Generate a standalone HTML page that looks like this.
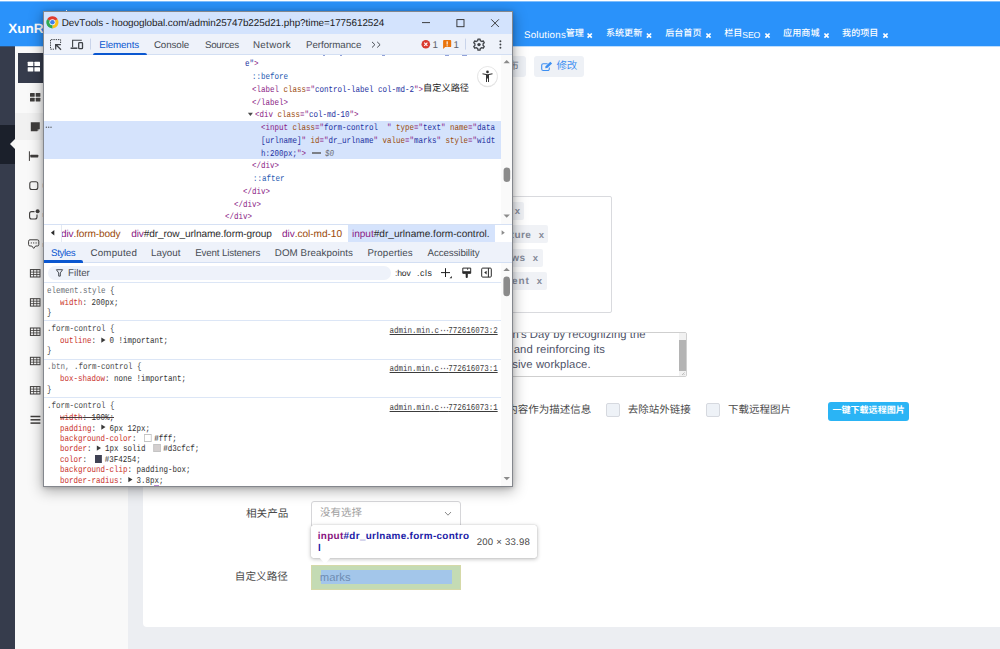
<!DOCTYPE html>
<html><head><meta charset="utf-8"><title>page</title>
<style>
*{box-sizing:border-box;margin:0;padding:0}
html,body{width:1000px;height:649px;overflow:hidden;background:#eceef2;font-family:"Liberation Sans",sans-serif;font-kerning:none;text-rendering:geometricPrecision}
.a{position:absolute}
.u{position:absolute;white-space:pre;line-height:1;font-kerning:none}
.cjt{font-family:"Liberation Sans","Noto Sans CJK SC",sans-serif}
.m{position:absolute;white-space:pre;font-family:"Liberation Mono",monospace;font-size:9px;line-height:12px;transform:scaleX(.8333);transform-origin:0 0;color:#303030}
.mr{transform-origin:100% 0;text-decoration:underline;color:#3c3c3c}
.tg{color:#8a1a84}.an{color:#9a4a0a}.av{color:#1c2fa0}.ps{color:#2458b0}.gy{color:#6a6e74}
.pn{color:#c9302a}.sel{color:#4a4a4a}
.hr{position:absolute;left:44px;width:457px;height:1px;background:#dce6f6}
.sw{display:inline-block;width:8.6px;height:7.4px;vertical-align:-.5px;margin:0 3.4px 0 4px;border:1px solid #c4c4c4}
</style></head><body>
<!-- ============ PAGE ============ -->
<div class="a" style="left:0;top:0;width:1000px;height:2px;background:#fff"></div>
<div class="a" style="left:0;top:1px;width:1000px;height:45px;background:#2a92fa"></div>
<div class="a" style="left:0;top:1px;width:1000px;height:1px;background:#fff;opacity:.4"></div>
<div class="a" style="left:15px;top:46px;width:113px;height:603px;background:#f9f9f9"></div>
<div class="a" style="left:15px;top:112.5px;width:113px;height:27.5px;background:#f1f1f1"></div>
<div class="a" style="left:0;top:46px;width:15px;height:603px;background:#363c4c"></div>
<div class="a" style="left:0;top:125px;width:15px;height:39px;background:#1b202b"></div>
<div class="a" style="left:9.5px;top:138.5px;width:0;height:0;border-top:5.5px solid transparent;border-bottom:5.5px solid transparent;border-right:5.5px solid #f5f5f5"></div>
<div class="a" style="left:143px;top:46px;width:857px;height:581px;background:#fff;border-radius:0 0 0 4px"></div>
<div class="a" style="left:0;top:46px;width:1000px;height:1px;background:#2a92fa;opacity:.3"></div>
<div class="a" style="left:18px;top:53px;width:40px;height:29.5px;background:#363c4c"></div>

<div class="u" style="left:8.28px;top:22.00px;font-size:13.5px;letter-spacing:0.000px;color:#fff;font-weight:bold;">XunRuiCMS</div>

<!-- top tabs -->
<div class="u" style="left:523.96px;top:31.00px;font-size:9.75px;letter-spacing:0.211px;color:#fff;">Solutions</div>
<div class="u cjt" style="left:565.66px;top:29.25px;font-size:9.1px;color:#fff;font-weight:500;">管理</div>
<div class="u cjt" style="left:605.89px;top:29.25px;font-size:9.1px;color:#fff;font-weight:500;">系统更新</div>
<div class="u cjt" style="left:665.15px;top:29.25px;font-size:9.1px;color:#fff;font-weight:500;">后台首页</div>
<div class="u cjt" style="left:724.15px;top:29.25px;font-size:9.1px;color:#fff;font-weight:500;">栏目</div>
<div class="u" style="left:742.20px;top:31.00px;font-size:8.7px;letter-spacing:-0.081px;color:#fff;">SEO</div>
<div class="u cjt" style="left:783.11px;top:29.25px;font-size:9.1px;color:#fff;font-weight:500;">应用商城</div>
<div class="u cjt" style="left:842.07px;top:29.25px;font-size:9.1px;color:#fff;font-weight:500;">我的项目</div>

<!-- buttons row -->
<div class="a" style="left:495px;top:56px;width:31px;height:21px;background:#eef1f6;border-radius:3px"></div>
<div class="u cjt" style="left:508.17px;top:61.25px;font-size:10.5px;color:#6f7687;">布</div>
<div class="a" style="left:534px;top:56px;width:50px;height:21px;background:#eef1f6;border-radius:3px"></div>
<div class="u cjt" style="left:556.39px;top:61.25px;font-size:10.5px;color:#3d8ff2;">修改</div>

<!-- tag box -->
<div class="a" style="left:480px;top:196px;width:132px;height:117px;border:1px solid #d9dade;border-radius:2px;background:#fff"></div>
<div class="a" style="left:490px;top:202px;width:34px;height:18px;background:#f0f2f6;border-radius:2px"></div>
<div class="a" style="left:490px;top:225px;width:58px;height:18px;background:#f0f2f6;border-radius:2px"></div>
<div class="a" style="left:490px;top:249px;width:52.5px;height:17.5px;background:#f0f2f6;border-radius:2px"></div>
<div class="a" style="left:490px;top:272px;width:56.5px;height:17.5px;background:#f0f2f6;border-radius:2px"></div>
<div class="u" style="left:514.74px;top:207.00px;font-size:9.5px;letter-spacing:-1.249px;color:#858a99;font-weight:bold;">x</div>
<div class="u" style="left:504.61px;top:231.00px;font-size:10.0px;letter-spacing:0.445px;color:#858a99;font-weight:bold;">cture</div>
<div class="u" style="left:538.74px;top:231.00px;font-size:9.5px;letter-spacing:-0.749px;color:#858a99;font-weight:bold;">x</div>
<div class="u" style="left:505.11px;top:254.00px;font-size:10.0px;letter-spacing:0.500px;color:#858a99;font-weight:bold;">ews</div>
<div class="u" style="left:532.64px;top:254.00px;font-size:9.5px;letter-spacing:-0.849px;color:#858a99;font-weight:bold;">x</div>
<div class="u" style="left:502.34px;top:277.00px;font-size:10.0px;letter-spacing:0.897px;color:#858a99;font-weight:bold;">ment</div>
<div class="u" style="left:536.64px;top:277.00px;font-size:9.5px;letter-spacing:-0.849px;color:#858a99;font-weight:bold;">x</div>

<!-- textarea -->
<div class="a" style="left:480px;top:332px;width:206.5px;height:45px;border:1px solid #cfcfcf;border-radius:2px;background:#fff;overflow:hidden">
 <div class="a" style="right:0;top:0;width:6.5px;height:43px;background:#f1f1f1"></div>
 <div class="a" style="right:0;top:7px;width:6.5px;height:30.5px;background:#b4b4b4"></div>
</div>
<div class="a" style="left:500px;top:333px;width:170px;height:12px;overflow:hidden">
 <div class="a" style="left:-500px;top:-333px"><div class="u" style="left:512.45px;top:330.00px;font-size:11.25px;letter-spacing:0.058px;color:#4d5267;">n's Day by recognizing the</div></div>
</div>
<div class="u" style="left:513.72px;top:345.00px;font-size:11.25px;letter-spacing:0.133px;color:#4d5267;">and reinforcing its</div>
<div class="u" style="left:505.87px;top:360.00px;font-size:11.25px;letter-spacing:0.106px;color:#4d5267;">usive workplace.</div>

<!-- checkbox row -->
<div class="u cjt" style="left:507.36px;top:404.55px;font-size:10.5px;color:#4a4a4a;">内容作为描述信息</div>
<div class="a" style="left:605.5px;top:402.5px;width:14.5px;height:14.5px;background:#eef2f7;border:1px solid #d6d9df;border-radius:2px"></div>
<div class="u cjt" style="left:627.74px;top:404.55px;font-size:10.5px;color:#4a4a4a;">去除站外链接</div>
<div class="a" style="left:705.5px;top:402.5px;width:14.5px;height:14.5px;background:#eef2f7;border:1px solid #d6d9df;border-radius:2px"></div>
<div class="u cjt" style="left:728.02px;top:404.55px;font-size:10.5px;color:#4a4a4a;">下载远程图片</div>
<div class="a" style="left:828px;top:401.5px;width:81px;height:19.5px;background:#2ab4f5;border-radius:3px"></div>
<div class="u cjt" style="left:832.42px;top:406.28px;font-size:9.05px;color:#fff;font-weight:bold;">一键下载远程图片</div>

<!-- related products -->
<div class="u cjt" style="left:245.99px;top:508.60px;font-size:10.6px;color:#4a4a4a;">相关产品</div>
<div class="a" style="left:311px;top:501px;width:150px;height:27px;border:1px solid #d6d6d9;border-radius:3px;background:#fff"></div>
<div class="u cjt" style="left:319.93px;top:508.25px;font-size:10.5px;color:#a0a0a0;">没有选择</div>
<svg class="a" style="left:444px;top:510px" width="8" height="8" viewBox="0 0 8 8"><path d="M1 2 L4 5.2 L7 2" fill="none" stroke="#8a8a8a" stroke-width="1"/></svg>

<!-- custom path -->
<div class="u cjt" style="left:234.87px;top:571.70px;font-size:10.6px;color:#4a4a4a;">自定义路径</div>
<div class="a" style="left:311px;top:564.5px;width:150px;height:25px;background:#c4dbb4;outline:1px solid rgba(225,215,160,.6);outline-offset:-1px"></div>
<div class="a" style="left:320.5px;top:570px;width:131.5px;height:14px;background:#a3c6ea"></div>
<div class="u" style="left:319.75px;top:573.00px;font-size:11.25px;letter-spacing:0.082px;color:#6e8cb2;">marks</div>

<!-- tooltip -->
<div class="a" style="left:311px;top:525px;width:225.5px;height:32.5px;background:#fff;border-radius:2.5px;box-shadow:0 1px 4px rgba(0,0,0,.28),0 0 1px rgba(0,0,0,.25)"></div>
<div class="a" style="left:319px;top:557px;width:0;height:0;border-left:6px solid transparent;border-right:6px solid transparent;border-top:7px solid #fff"></div>
<div class="u" style="left:317.71px;top:532.00px;font-size:9.9px;letter-spacing:0.338px;color:#1a1aa6;font-weight:bold;"><span style="color:#881280">input</span>#dr_urlname.form-contro</div>
<div class="u" style="left:317.91px;top:544.00px;font-size:9.9px;letter-spacing:0.000px;color:#1a1aa6;font-weight:bold;">l</div>
<div class="u" style="left:476.72px;top:538.00px;font-size:9.6px;letter-spacing:0.212px;color:#494949;">200 × 33.98</div>

<!-- ============ DEVTOOLS ============ -->
<div class="a" style="left:43px;top:11px;width:470px;height:476px;background:#fff;border:1px solid #84878d;box-shadow:0 3px 13px 1px rgba(0,0,0,.31),0 1px 4px rgba(0,0,0,.18)"></div>
<div class="a" style="left:66px;top:10px;width:1px;height:1px;background:#fff;opacity:.8"></div>
<div class="a" style="left:44px;top:12px;width:468px;height:22px;background:#d3e3fd"></div>
<div class="a" style="left:44px;top:34px;width:468px;height:21px;background:#eef2fa;border-bottom:1px solid #d3dff3"></div>
<div class="u" style="left:61.79px;top:19.00px;font-size:9.9px;letter-spacing:-0.045px;color:#1b1b1b;">DevTools - hoogoglobal.com/admin25747b225d21.php?time=1775612524</div>
<div class="u" style="left:99.30px;top:41.00px;font-size:9.75px;letter-spacing:-0.113px;color:#0b57d0;">Elements</div>
<div class="a" style="left:92.5px;top:52.5px;width:54.5px;height:2.5px;background:#0b57d0;border-radius:2px 2px 0 0"></div>
<div class="u" style="left:153.90px;top:41.00px;font-size:9.75px;letter-spacing:-0.074px;color:#474c54;">Console</div>
<div class="u" style="left:204.96px;top:41.00px;font-size:9.75px;letter-spacing:-0.279px;color:#474c54;">Sources</div>
<div class="u" style="left:253.00px;top:41.00px;font-size:9.75px;letter-spacing:0.321px;color:#474c54;">Network</div>
<div class="u" style="left:306.00px;top:41.00px;font-size:9.75px;letter-spacing:-0.048px;color:#474c54;">Performance</div>
<div class="u" style="left:432.46px;top:41.00px;font-size:9.75px;letter-spacing:0.000px;color:#5c6168;">1</div>
<div class="u" style="left:453.46px;top:41.00px;font-size:9.75px;letter-spacing:0.000px;color:#5c6168;">1</div>

<!-- elements panel -->
<div class="a" style="left:501px;top:55px;width:11px;height:169px;background:#fafafa"></div>
<div class="a" style="left:44px;top:121px;width:457px;height:37.5px;background:#d5e3fc"></div>
<div class="m " style="left:245.40px;top:58px;"><span class="av">e"</span><span class="tg">&gt;</span></div>
<div class="m " style="left:252.30px;top:71px;"><span class="ps">::before</span></div>
<div class="m " style="left:252.30px;top:84px;"><span class="tg">&lt;label </span><span class="an">class</span><span class="tg">="</span><span class="av">control-label col-md-2</span><span class="tg">"&gt;</span></div>
<div class="u cjt" style="left:423.10px;top:84.30px;font-size:9.2px;color:#262626;">自定义路径</div>
<div class="m " style="left:252.30px;top:97px;"><span class="tg">&lt;/label&gt;</span></div>
<div class="m " style="left:254.50px;top:109px;"><span class="tg">&lt;div </span><span class="an">class</span><span class="tg">="</span><span class="av">col-md-10</span><span class="tg">"&gt;</span></div>
<div class="m " style="left:261.30px;top:122px;"><span class="tg">&lt;input </span><span class="an">class</span><span class="tg">="</span><span class="av">form-control  </span><span class="tg">" </span><span class="an">type</span><span class="tg">="</span><span class="av">text</span><span class="tg">" </span><span class="an">name</span><span class="tg">="</span><span class="av">data</span></div>
<div class="m " style="left:261.30px;top:135px;"><span class="av">[urlname]</span><span class="tg">" </span><span class="an">id</span><span class="tg">="</span><span class="av">dr_urlname</span><span class="tg">" </span><span class="an">value</span><span class="tg">="</span><span class="av">marks</span><span class="tg">" </span><span class="an">style</span><span class="tg">="</span><span class="av">widt</span></div>
<div class="m " style="left:261.30px;top:148px;"><span class="av">h:200px;</span><span class="tg">"&gt;</span></div>
<div class="a" style="left:312.3px;top:152px;width:8.5px;height:1.6px;background:#7b7f86"></div>
<div class="m " style="left:324.60px;top:148px;"><span class="gy"><i>$0</i></span></div>
<div class="m " style="left:252.30px;top:160px;"><span class="tg">&lt;/div&gt;</span></div>
<div class="m " style="left:252.60px;top:173px;"><span class="ps">::after</span></div>
<div class="m " style="left:243.30px;top:186px;"><span class="tg">&lt;/div&gt;</span></div>
<div class="m " style="left:234.30px;top:199px;"><span class="tg">&lt;/div&gt;</span></div>
<div class="m " style="left:225.30px;top:211px;"><span class="tg">&lt;/div&gt;</span></div>

<div class="a" style="left:322.5px;top:55px;width:2px;height:1px;background:#3a55b8;opacity:.55"></div><div class="a" style="left:339.5px;top:55px;width:2px;height:1px;background:#3a55b8;opacity:.55"></div><div class="a" style="left:382px;top:55px;width:3px;height:1px;background:#3a55b8;opacity:.55"></div><div class="a" style="left:444.5px;top:55px;width:4.5px;height:1px;background:#3a55b8;opacity:.55"></div><div class="a" style="left:462px;top:55px;width:4.5px;height:1px;background:#3a55b8;opacity:.55"></div>
<!-- breadcrumbs -->
<div class="a" style="left:44px;top:224px;width:468px;height:18px;background:#fff;border-top:1px solid #d6e1f4"></div>
<div class="a" style="left:347.5px;top:225px;width:147px;height:17px;background:#d5e3fc"></div>
<div class="u" style="left:60.98px;top:230.00px;font-size:10.1px;letter-spacing:-0.128px;color:#222;"><span class="tg">div</span><span class="an">.form-body</span></div>
<div class="a" style="left:44px;top:225px;width:17.5px;height:17px;background:#fff;border-right:1px solid #e4e9f2"></div>
<div class="u" style="left:131.18px;top:230.00px;font-size:10.1px;letter-spacing:-0.106px;color:#2b2b2b;"><span class="tg">div</span>#dr_row_urlname.form-group</div>
<div class="u" style="left:281.98px;top:230.00px;font-size:10.1px;letter-spacing:-0.042px;color:#222;"><span class="tg">div</span><span class="an">.col-md-10</span></div>
<div class="u" style="left:351.92px;top:230.00px;font-size:10.1px;letter-spacing:-0.010px;color:#2b2b2b;"><span class="tg">input</span>#dr_urlname.form-control.</div>

<!-- styles tabs -->
<div class="a" style="left:44px;top:242px;width:468px;height:21px;background:#eef2fa;border-bottom:1px solid #d3dff3"></div>
<div class="u" style="left:51.06px;top:249.00px;font-size:9.75px;letter-spacing:-0.391px;color:#0b57d0;">Styles</div>
<div class="a" style="left:44px;top:260.3px;width:39.2px;height:2.5px;background:#0b57d0;border-radius:0 2px 0 0"></div>
<div class="u" style="left:90.50px;top:249.00px;font-size:9.75px;letter-spacing:0.191px;color:#474c54;">Computed</div>
<div class="u" style="left:151.00px;top:249.00px;font-size:9.75px;letter-spacing:0.039px;color:#474c54;">Layout</div>
<div class="u" style="left:195.20px;top:249.00px;font-size:9.75px;letter-spacing:-0.146px;color:#474c54;">Event Listeners</div>
<div class="u" style="left:274.80px;top:249.00px;font-size:9.75px;letter-spacing:0.086px;color:#474c54;">DOM Breakpoints</div>
<div class="u" style="left:367.40px;top:249.00px;font-size:9.75px;letter-spacing:0.102px;color:#474c54;">Properties</div>
<div class="u" style="left:427.48px;top:249.00px;font-size:9.75px;letter-spacing:-0.088px;color:#474c54;">Accessibility</div>

<!-- filter row -->
<div class="a" style="left:44px;top:263px;width:468px;height:20px;background:#fff;border-bottom:1px solid #dce6f6"></div>
<div class="a" style="left:47.5px;top:266px;width:343.5px;height:14px;background:#eef2fa;border-radius:7px"></div>
<div class="u" style="left:68.00px;top:269.00px;font-size:9.75px;letter-spacing:0.039px;color:#4b4f56;">Filter</div>
<div class="u" style="left:395.11px;top:269.00px;font-size:8.6px;letter-spacing:-0.214px;color:#1f1f1f;">:hov</div>
<div class="u" style="left:416.90px;top:269.00px;font-size:8.8px;letter-spacing:0.607px;color:#1f1f1f;">.cls</div>
<div class="a" style="left:501px;top:263px;width:11px;height:223px;background:#fafafa"></div>

<!-- styles content -->
<div class="m gy" style="left:46.70px;top:285px;">element.style <span class="sel">&#123;</span></div>
<div class="m " style="left:59.50px;top:297px;"><span class="pn">width</span>: 200px;</div>
<div class="m sel" style="left:46.70px;top:307px;">&#125;</div>
<div class="hr" style="top:320px"></div>
<div class="m sel" style="left:46.70px;top:323px;">.form-control &#123;</div>
<div class="m " style="left:59.50px;top:335px;"><span class="pn">outline</span>:   0 !important;</div>
<div class="m sel" style="left:46.70px;top:345px;">&#125;</div>
<div class="hr" style="top:359px"></div>
<div class="m sel" style="left:46.70px;top:361px;"><span class="gy">.btn, </span>.form-control &#123;</div>
<div class="m " style="left:59.50px;top:373px;"><span class="pn">box-shadow</span>: none !important;</div>
<div class="m sel" style="left:46.70px;top:384px;">&#125;</div>
<div class="hr" style="top:397px"></div>
<div class="m sel" style="left:46.70px;top:400px;">.form-control &#123;</div>
<div class="m " style="left:59.50px;top:412px;text-decoration:line-through;text-decoration-color:#4a3a3a"><span class="pn">width</span>: 100%;</div>
<div class="m " style="left:59.50px;top:423px;"><span class="pn">padding</span>:   6px 12px;</div>
<div class="m " style="left:59.50px;top:433px;"><span class="pn">background-color</span>: <span class="sw" style="background:#fff;border-color:#c4c4c4"></span>#fff;</div>
<div class="m " style="left:59.50px;top:443px;"><span class="pn">border</span>:   1px solid <span class="sw" style="background:#d3cfcf;border-color:#c4c4c4"></span>#d3cfcf;</div>
<div class="m " style="left:59.50px;top:454px;"><span class="pn">color</span>: <span class="sw" style="background:#3F4254;border-color:#3F4254"></span>#3F4254;</div>
<div class="m " style="left:59.50px;top:464px;"><span class="pn">background-clip</span>: padding-box;</div>
<div class="m " style="left:59.50px;top:475px;"><span class="pn">border-radius</span>:   3.8px;</div>
<div class="m mr" style="right:502.10px;top:325px;">admin.min.c<span style="position:relative;top:-.5px;letter-spacing:-1.8px">···</span>772616073:2</div>
<div class="m mr" style="right:502.10px;top:363px;">admin.min.c<span style="position:relative;top:-.5px;letter-spacing:-1.8px">···</span>772616073:1</div>
<div class="m mr" style="right:502.10px;top:402px;">admin.min.c<span style="position:relative;top:-.5px;letter-spacing:-1.8px">···</span>772616073:1</div>
<div class="a" style="left:154px;top:485px;width:5px;height:1px;background:#b98bd0"></div>

<!-- ============ ICON OVERLAY ============ -->
<svg class="a" style="left:0;top:0" width="1000" height="649" viewBox="0 0 1000 649">
<rect x="27.70" y="61.70" width="5.6" height="4.4" rx=".5" fill="#fff"/>
<rect x="27.70" y="67.20" width="5.6" height="4.4" rx=".5" fill="#fff"/>
<rect x="34.40" y="61.70" width="5.6" height="4.4" rx=".5" fill="#fff"/>
<rect x="34.40" y="67.20" width="5.6" height="4.4" rx=".5" fill="#fff"/>
<rect x="30.00" y="93.00" width="4.7" height="3.8" rx=".5" fill="#3d3b3a"/>
<rect x="30.00" y="97.80" width="4.7" height="3.8" rx=".5" fill="#3d3b3a"/>
<rect x="35.70" y="93.00" width="4.7" height="3.8" rx=".5" fill="#3d3b3a"/>
<rect x="35.70" y="97.80" width="4.7" height="3.8" rx=".5" fill="#3d3b3a"/>
<path d="M30.8 122.3 H39.8 V128.6 L37.2 131.3 H30.8 Z" fill="#3d3b3a"/><path d="M37.6 131.3 V129 H39.8 Z" fill="#8a8a8a"/>
<rect x="28.9" y="151.3" width="1" height="9.6" fill="#3d3b3a"/><rect x="30.3" y="154.7" width="8" height="2.7" rx=".6" fill="#3d3b3a"/>
<rect x="29.8" y="181.7" width="8" height="7.8" rx="2" fill="none" stroke="#3d3b3a" stroke-width="1.1"/>
<path d="M34.5 211.6 H31.6 a2 2 0 0 0 -2 2 V217 a2 2 0 0 0 2 2 H35 a2 2 0 0 0 2 -2 V214.6" fill="none" stroke="#3d3b3a" stroke-width="1.1"/><circle cx="37.6" cy="211.3" r="2" fill="#3d3b3a"/>
<path d="M30 239.8 H37.4 a1.4 1.4 0 0 1 1.4 1.4 V244.6 a1.4 1.4 0 0 1 -1.4 1.4 H35.6 L33.7 248.4 L31.8 246 H30 a1.4 1.4 0 0 1 -1.4 -1.4 V241.2 a1.4 1.4 0 0 1 1.4 -1.4 Z" fill="none" stroke="#3d3b3a" stroke-width="1"/>
<circle cx="31.3" cy="242.9" r=".6" fill="#3d3b3a"/>
<circle cx="33.7" cy="242.9" r=".6" fill="#3d3b3a"/>
<circle cx="36.1" cy="242.9" r=".6" fill="#3d3b3a"/>
<rect x="30.4" y="269.60" width="9.6" height="7.4" fill="none" stroke="#3d3b3a" stroke-width="1"/><path d="M30.4 272.10 H40 M30.4 274.50 H40 M33.6 269.60 V277.00 M36.8 269.60 V277.00" stroke="#3d3b3a" stroke-width=".8" fill="none"/>
<rect x="30.4" y="298.70" width="9.6" height="7.4" fill="none" stroke="#3d3b3a" stroke-width="1"/><path d="M30.4 301.20 H40 M30.4 303.60 H40 M33.6 298.70 V306.10 M36.8 298.70 V306.10" stroke="#3d3b3a" stroke-width=".8" fill="none"/>
<rect x="30.4" y="328.00" width="9.6" height="7.4" fill="none" stroke="#3d3b3a" stroke-width="1"/><path d="M30.4 330.50 H40 M30.4 332.90 H40 M33.6 328.00 V335.40 M36.8 328.00 V335.40" stroke="#3d3b3a" stroke-width=".8" fill="none"/>
<rect x="30.4" y="357.30" width="9.6" height="7.4" fill="none" stroke="#3d3b3a" stroke-width="1"/><path d="M30.4 359.80 H40 M30.4 362.20 H40 M33.6 357.30 V364.70 M36.8 357.30 V364.70" stroke="#3d3b3a" stroke-width=".8" fill="none"/>
<rect x="30.4" y="386.60" width="9.6" height="7.4" fill="none" stroke="#3d3b3a" stroke-width="1"/><path d="M30.4 389.10 H40 M30.4 391.50 H40 M33.6 386.60 V394.00 M36.8 386.60 V394.00" stroke="#3d3b3a" stroke-width=".8" fill="none"/>
<rect x="30.5" y="415.75" width="9.9" height="1.5" fill="#3d3b3a"/>
<rect x="30.5" y="419.05" width="9.9" height="1.5" fill="#3d3b3a"/>
<rect x="30.5" y="422.35" width="9.9" height="1.5" fill="#3d3b3a"/>
<rect x="42.2" y="183.5" width=".8" height="4" fill="#a8876a" opacity=".45"/>
<rect x="42.2" y="213" width=".8" height="4" fill="#a8876a" opacity=".45"/>
<rect x="42.2" y="243" width=".8" height="4" fill="#a8876a" opacity=".45"/>
<path d="M587.6 33.5 L591.8 37.7 M591.8 33.5 L587.6 37.7" stroke="#fff" stroke-width="1.7"/>
<path d="M646.9 33.5 L651.1 37.7 M651.1 33.5 L646.9 37.7" stroke="#fff" stroke-width="1.7"/>
<path d="M706.4 33.5 L710.6 37.7 M710.6 33.5 L706.4 37.7" stroke="#fff" stroke-width="1.7"/>
<path d="M765.4 33.5 L769.6 37.7 M769.6 33.5 L765.4 37.7" stroke="#fff" stroke-width="1.7"/>
<path d="M824.4 33.5 L828.6 37.7 M828.6 33.5 L824.4 37.7" stroke="#fff" stroke-width="1.7"/>
<path d="M883.4 33.5 L887.6 37.7 M887.6 33.5 L883.4 37.7" stroke="#fff" stroke-width="1.7"/>
<path d="M547.6 63.7 H543.2 a1.5 1.5 0 0 0 -1.5 1.5 V69 a1.5 1.5 0 0 0 1.5 1.5 H547.8 a1.5 1.5 0 0 0 1.5 -1.5 V67.6" fill="none" stroke="#3d8ff2" stroke-width="1.1"/><path d="M545.2 68.3 L545.6 66.3 L550.3 61.8 L552.1 63.6 L547.3 68 Z" fill="#3d8ff2"/>
<path d="M52.4 22.3 L47.12 19.25 A6.1 6.1 0 0 1 57.68 19.25 Z" fill="#e03b2e"/>
<path d="M52.4 22.3 L57.68 19.25 A6.1 6.1 0 0 1 52.40 28.40 Z" fill="#fbc116"/>
<path d="M52.4 22.3 L52.40 28.40 A6.1 6.1 0 0 1 47.12 19.25 Z" fill="#2da94f"/>
<circle cx="52.4" cy="22.3" r="2.95" fill="#fff"/><circle cx="52.4" cy="22.3" r="2.3" fill="#3f7fe8"/>
<path d="M422 22.6 H430" stroke="#2b2b2b" stroke-width=".9"/>
<rect x="456.9" y="19.6" width="7.1" height="7.1" fill="none" stroke="#2b2b2b" stroke-width=".9"/>
<path d="M491.2 19.3 L498.9 27 M498.9 19.3 L491.2 27" stroke="#2b2b2b" stroke-width=".9"/>
<path d="M60.6 43 V39.6 H50.5 V49.2 H54" fill="none" stroke="#3f4348" stroke-width="1" stroke-dasharray="1.4 .9"/>
<path d="M55.7 49.6 V44.5 H60.9 M56 44.8 L61 49.8" fill="none" stroke="#3f4348" stroke-width="1.25"/><path d="M55.2 44 H58 L55.2 46.8 Z" fill="#3f4348"/>
<path d="M81.8 40.3 H72.6 V47.2" fill="none" stroke="#3f4348" stroke-width="1.1"/><path d="M70.6 48.2 H77.4" fill="none" stroke="#3f4348" stroke-width="1.5"/><rect x="78.7" y="42.7" width="3.8" height="5.9" rx=".7" fill="#eef2fa" stroke="#3f4348" stroke-width="1.3"/>
<path d="M90.5 38.6 V49.6 M465.5 38.6 V49.6" stroke="#c9d4ea" stroke-width="1"/>
<path d="M372 41.9 L374.9 44.7 L372 47.5 M377.2 41.9 L380.1 44.7 L377.2 47.5" fill="none" stroke="#474c54" stroke-width="1"/>
<circle cx="425.8" cy="44.3" r="4.3" fill="#d93a2f"/><path d="M424.2 42.7 L427.4 45.9 M427.4 42.7 L424.2 45.9" stroke="#fff" stroke-width="1.1"/>
<path d="M444 40.1 H450.3 a.9 .9 0 0 1 .9 .9 V46.2 a.9 .9 0 0 1 -.9 .9 H445.2 L443.1 49 V41 a.9 .9 0 0 1 .9 -.9 Z" fill="#e9730c"/><rect x="446.6" y="41.3" width="1.1" height="3.3" fill="#fff"/><rect x="446.6" y="45.3" width="1.1" height="1.1" fill="#fff"/>
<path d="M477.93 39.10 L480.07 39.10 L480.23 40.58 L481.86 41.53 L483.23 40.93 L484.29 42.78 L483.09 43.66 L483.09 45.54 L484.29 46.42 L483.23 48.27 L481.86 47.67 L480.23 48.62 L480.07 50.10 L477.93 50.10 L477.77 48.62 L476.14 47.67 L474.77 48.27 L473.71 46.42 L474.91 45.54 L474.91 43.66 L473.71 42.78 L474.77 40.93 L476.14 41.53 L477.77 40.58 Z" fill="none" stroke="#3f4348" stroke-width="1.3" stroke-linejoin="round"/><circle cx="479" cy="44.6" r="1.7" fill="#3f4348"/>
<circle cx="500.4" cy="41.3" r=".95" fill="#3f4348"/>
<circle cx="500.4" cy="44.5" r=".95" fill="#3f4348"/>
<circle cx="500.4" cy="47.7" r=".95" fill="#3f4348"/>
<path d="M503.5 63.2 L506.7 60.0 L509.9 63.2 Z" fill="#8b8b8b"/>
<path d="M503.5 214.6 L506.7 217.79999999999998 L509.9 214.6 Z" fill="#8b8b8b"/>
<rect x="503.6" y="167.4" width="6.6" height="14.6" rx="3.3" fill="#8b8b8b"/>
<path d="M503.40000000000003 270.90000000000003 L506.6 267.7 L509.8 270.90000000000003 Z" fill="#8b8b8b"/>
<path d="M503.6 477.09999999999997 L506.8 480.3 L510.0 477.09999999999997 Z" fill="#8b8b8b"/>
<rect x="503.4" y="276.5" width="6.6" height="19.7" rx="3.3" fill="#8b8b8b"/>
<circle cx="487.5" cy="76.9" r="10.3" fill="rgba(0,0,0,.10)"/><circle cx="487.5" cy="76.4" r="9.9" fill="#fff" stroke="#dcdcdc" stroke-width=".6"/>
<circle cx="487.5" cy="71.9" r="1.35" fill="#333"/><path d="M482.4 74.2 L486 75 V82 H487 V78.6 H488 V82 H489 V75 L492.6 74.2 L492.4 73.3 L487.5 74.2 L482.6 73.3 Z" fill="#333"/>
<path d="M247.9 112.7 H252.9 L250.4 115.9 Z" fill="#4a4a4a"/>
<circle cx="46.4" cy="127.3" r=".75" fill="#5f6368"/>
<circle cx="48.7" cy="127.3" r=".75" fill="#5f6368"/>
<circle cx="51" cy="127.3" r=".75" fill="#5f6368"/>
<path d="M54.3 230 V235.5 L50.9 232.75 Z" fill="#2b2b2b"/><path d="M501.6 230.3 V235.1 L504.8 232.7 Z" fill="#8b8b8b"/>
<path d="M56.4 269.7 H62.6 L60.3 272.9 V276.1 H58.7 V272.9 Z" fill="none" stroke="#474c54" stroke-width="1"/>
<path d="M441 272.6 H450 M445.5 268.2 V277" stroke="#1f1f1f" stroke-width="1"/><path d="M449.6 278.2 H451.8 V276 Z" fill="#1f1f1f"/>
<path d="M462.8 268.1 H470.7 V273.3 H462.8 Z" fill="none" stroke="#2a2a2a" stroke-width="1"/><rect x="462.8" y="271.2" width="7.9" height="2.1" fill="#2a2a2a"/><path d="M467.6 268 V270" stroke="#2a2a2a" stroke-width=".7"/><rect x="465.7" y="273.3" width="2.1" height="4.6" rx=".9" fill="#2a2a2a"/>
<rect x="481.7" y="268.1" width="9.6" height="9" rx="1" fill="none" stroke="#2a2a2a" stroke-width="1"/><path d="M488.4 268.1 V277.1" stroke="#2a2a2a" stroke-width="1"/><path d="M486.6 270.8 V274.4 L484.2 272.6 Z" fill="#2a2a2a"/>
<path d="M101.3 337.5 V342.70000000000005 L105.5 340.1 Z" fill="#3a3a3a"/>
<path d="M101.3 424.5 V429.70000000000005 L105.5 427.1 Z" fill="#3a3a3a"/>
<path d="M96.8 445.5 V450.70000000000005 L101.0 448.1 Z" fill="#3a3a3a"/>
<path d="M128.3 477.0 V482.20000000000005 L132.5 479.6 Z" fill="#3a3a3a"/>
<path d="M684.5 372.5 L682 375 M684.5 374.2 L683.6 375.1" stroke="#9a9a9a" stroke-width=".6"/>
</svg>
</body></html>
